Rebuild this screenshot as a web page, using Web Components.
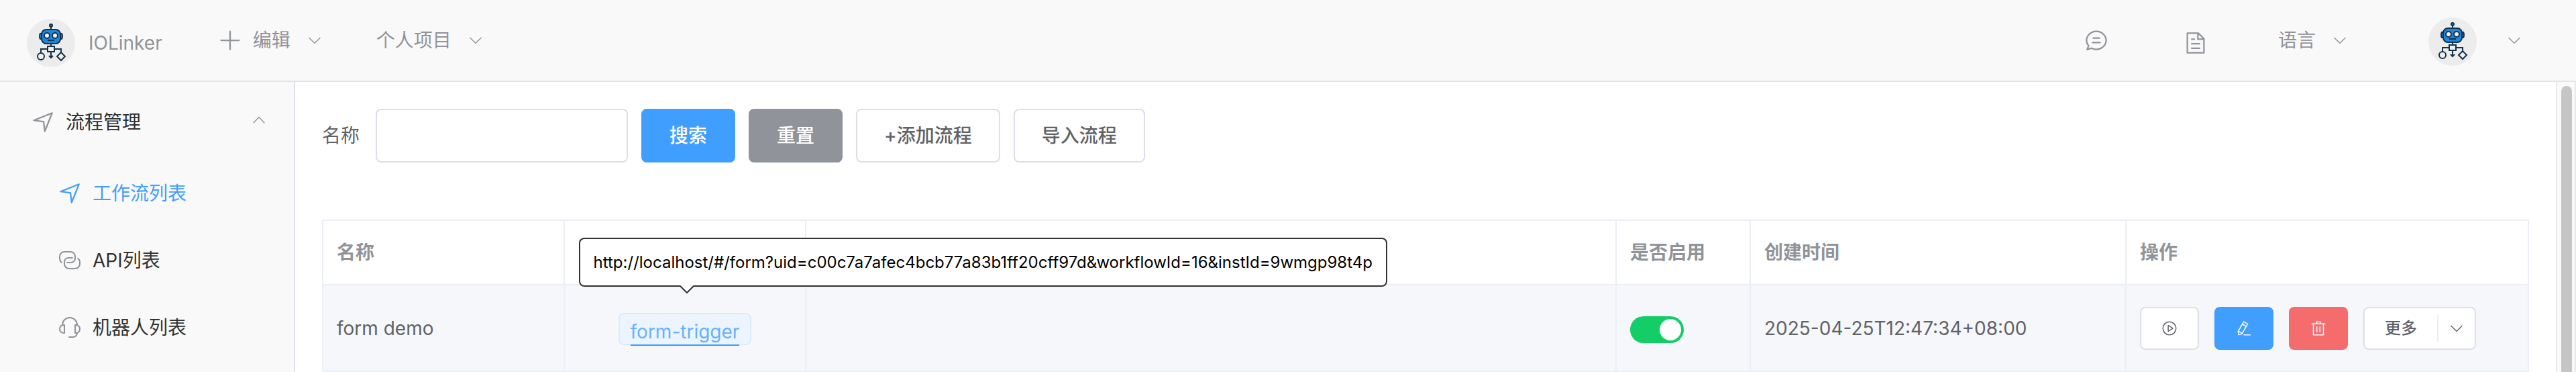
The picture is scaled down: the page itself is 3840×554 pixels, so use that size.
<!DOCTYPE html>
<html lang="zh-CN">
<head>
<meta charset="utf-8">
<title>IOLinker</title>
<style>
body { margin: 0; font: 28px/40px Inter, "Noto Sans CJK SC", sans-serif; color: #606266; background: #fff; }
</style>
</head>
<body>
<io-app></io-app>
<script>
const define = (name, html, setup) => {
  const template = document.createElement('template');
  template.innerHTML = html;
  customElements.define(name, class extends HTMLElement {
    constructor() {
      super();
      this.attachShadow({ mode: 'open' }).append(template.content.cloneNode(true));
    }
    connectedCallback() { if (setup) setup(this, this.shadowRoot); }
  });
};

const P = {
  plus: 'M480 480V128a32 32 0 0 1 64 0v352h352a32 32 0 1 1 0 64H544v352a32 32 0 1 1-64 0V544H128a32 32 0 0 1 0-64z',
  down: 'M831.872 340.864 512 652.672 192.128 340.864a30.592 30.592 0 0 0-42.752 0 29.12 29.12 0 0 0 0 41.6L489.664 714.24a32 32 0 0 0 44.672 0l340.288-331.712a29.12 29.12 0 0 0 0-41.728 30.592 30.592 0 0 0-42.752 0z',
  up: 'm488.832 344.32-339.84 356.672a32 32 0 0 0 0 44.16l.384.384a29.44 29.44 0 0 0 42.688 0l320-335.872 319.872 335.872a29.44 29.44 0 0 0 42.688 0l.384-.384a32 32 0 0 0 0-44.16L535.168 344.32a32 32 0 0 0-46.336 0z',
  position: 'm249.6 417.088 319.744 43.072 39.168 310.272L845.12 178.88 249.6 417.088zm-129.024 47.168a32 32 0 0 1-7.68-61.44l777.792-311.04a32 32 0 0 1 41.6 41.6l-310.336 775.68a32 32 0 0 1-61.44-7.808L512 516.992l-391.424-52.736z',
  chat: 'm174.72 855.68 135.296-45.12 23.68 11.84C388.096 849.536 448.576 864 512 864c211.84 0 384-166.784 384-352S723.84 160 512 160 128 326.784 128 512c0 69.12 24.96 139.264 70.848 199.232l22.08 28.8-46.272 115.584zm-45.248 82.56A32 32 0 0 1 89.6 896l58.368-145.92C94.72 680.32 64 596.864 64 512 64 299.904 256 96 512 96s448 203.904 448 416-192 416-448 416a461.056 461.056 0 0 1-206.912-48.384l-175.616 58.56zM352 576h320q32 0 32 32t-32 32H352q-32 0-32-32t32-32zm32-192h256q32 0 32 32t-32 32H384q-32 0-32-32t32-32z',
  doc: 'M832 384H576V128H192v768h640V384zm-26.496-64L640 154.496V320h165.504zM160 64h480l256 256v608a32 32 0 0 1-32 32H160a32 32 0 0 1-32-32V96a32 32 0 0 1 32-32zm160 448h384v64H320v-64zm0-192h160v64H320v-64zm0 384h384v64H320v-64z',
  play: 'M512 64a448 448 0 1 1 0 896 448 448 0 0 1 0-896zm0 832a384 384 0 0 0 0-768 384 384 0 0 0 0 768zm-48-247.616L668.608 512 464 375.616v272.768zm10.624-342.656 249.472 166.336a48 48 0 0 1 0 79.872L474.624 718.272A48 48 0 0 1 400 678.336V345.6a48 48 0 0 1 74.624-39.936z',
  edit: 'm199.04 672.64 193.984 112 224-387.968-193.92-112-224 388.032zm-23.872 60.16 32.896 148.288 144.896-45.696L175.168 732.8zM455.04 229.248l193.92 112 56.704-98.112-193.984-112-56.64 98.112zM104.32 708.8l384-665.024 304.768 175.936L409.152 884.8h.064l-248.448 78.336L104.32 708.8zm384 254.272v-64h448v64h-448z',
  del: 'M160 256H96a32 32 0 0 1 0-64h256V95.936a32 32 0 0 1 32-32h256a32 32 0 0 1 32 32V192h256a32 32 0 1 1 0 64h-64v672a32 32 0 0 1-32 32H192a32 32 0 0 1-32-32V256zm448-64v-64H416v64h192zM224 896h576V256H224v640zm192-128a32 32 0 0 1-32-32V416a32 32 0 0 1 64 0v320a32 32 0 0 1-32 32zm192 0a32 32 0 0 1-32-32V416a32 32 0 0 1 64 0v320a32 32 0 0 1-32 32z'
};
const stroked = {
  link: '<path d="M6 21Q3 19 3 15V12A7 7 0 0 1 10 5H19A7 7 0 0 1 26 12V15A6 6 0 0 1 20 21H14"/><path d="M30 15Q33 17 33 20V23A7 7 0 0 1 26 30H17A7 7 0 0 1 10 23V20A6 6 0 0 1 16 14H22"/>',
  head: '<path d="M7 14A11 11 0 0 1 29 14M10 14V26Q3 26 3 20T10 14ZM26 14V26Q33 26 33 20T26 14ZM29 26A6 6 0 0 1 23 32H17"/>'
};

define('io-icon', `
<style>
  :host { display: block; flex: none; width: 36px; height: 36px; }
  :host([size="24"]) { width: 24px; height: 24px; }
  svg { display: block; width: 100%; height: 100%; }
</style><svg aria-hidden="true"></svg>`, (host, root) => {
  const name = host.getAttribute('name'), svg = root.querySelector('svg');
  if (stroked[name]) {
    svg.setAttribute('viewBox', '0 0 36 36');
    svg.innerHTML = '<g fill="none" stroke="currentColor" stroke-width="2" stroke-linecap="round" stroke-linejoin="round">' + stroked[name] + '</g>';
  } else {
    svg.setAttribute('viewBox', '0 0 1024 1024');
    svg.innerHTML = '<path fill="currentColor" d="' + P[name] + '"/>';
  }
});

define('io-avatar', `
<style>
  :host { display: block; flex: none; width: 72px; height: 72px; border-radius: 50%; background: #ececec; overflow: hidden; }
  svg { display: block; }
</style>
<svg viewBox="0 0 72 72" width="72" height="72" role="img" aria-label="IOLinker" fill="none" stroke="#15304a" stroke-width="2">
  <path d="M36 12v5M36 37v5M31 45H21v7M41 45h10v6M36 49v8M33 55l3 3 3-3"/>
  <circle cx="36" cy="10" r="2" fill="#1b87dc"/>
  <path d="M22 22h-2q-1 1-1 4t1 4h2M50 22h2q1 1 1 4t-1 4h-2" fill="#1b87dc"/>
  <rect x="22" y="16" width="28" height="21" rx="7" fill="#1b87dc"/>
  <circle cx="30" cy="25" r="4" fill="#f3f1ea"/><circle cx="42" cy="25" r="4" fill="#f3f1ea"/>
  <path d="M31 32h10"/>
  <rect x="31" y="41" width="10" height="8" fill="#f0f0f0"/>
  <circle cx="21" cy="56" r="5" fill="#f0f0f0"/><path d="M51 50l6 6-6 6-6-6z" fill="#f0f0f0"/>
</svg>`);

define('io-menu', `
<style>
  :host { display: block; }
  button { display: flex; align-items: center; gap: 24px; margin: 0; padding: 0; border: 0; background: none; font: inherit; color: inherit; }
  :host(.user) button { gap: 44px; }
  slot { display: flex; align-items: center; gap: 16px; }
</style>
<button type="button" aria-haspopup="menu"><slot></slot><io-icon name="down" size="24"></io-icon></button>`);

define('io-header', `
<style>
  :host { display: flex; align-items: center; box-sizing: border-box; height: 122px; padding: 0 80px 0 40px; background: #f9f9f9; border-bottom: 2px solid #e5e5e5; color: #909399; }
  .brand { display: flex; align-items: center; gap: 20px; padding-top: 8px; color: inherit; text-decoration: none; }
  nav { display: flex; align-items: center; gap: 80px; margin-left: 83px; }
  .tools { display: flex; align-items: center; margin-left: auto; }
  .tools button { margin: 0; padding: 0; border: 0; background: none; color: inherit; }
  .tools .doc { padding-top: 8px; margin: 0 105px 0 112px; }
  .user { margin-left: 120px; }
  .user io-avatar { margin-top: 4px; }
</style>
<a class="brand" href="#/"><io-avatar></io-avatar><span>IOLinker</span></a>
<nav>
  <io-menu><io-icon name="plus"></io-icon>编辑</io-menu>
  <io-menu>个人项目</io-menu>
</nav>
<div class="tools">
  <button type="button" aria-label="消息"><io-icon name="chat"></io-icon></button>
  <button type="button" class="doc" aria-label="文档"><io-icon name="doc"></io-icon></button>
  <io-menu>语言</io-menu>
  <io-menu class="user"><io-avatar></io-avatar></io-menu>
</div>`);

define('io-nav-item', `
<style>
  :host { display: block; color: #303133; }
  a { display: flex; align-items: center; gap: 16px; height: 100px; padding-left: 86px; color: inherit; text-decoration: none; }
  ::slotted(io-icon) { color: #909399; }
  :host([active]), :host([active]) ::slotted(io-icon) { color: #409eff; }
</style>
<a href="#/"><slot name="icon"></slot><span><slot></slot></span></a>`);

define('io-sidebar', `
<style>
  :host { display: block; box-sizing: border-box; background: #f9f9f9; border-right: 2px solid #dcdfe6; color: #303133; }
  button { display: flex; align-items: center; gap: 16px; box-sizing: border-box; width: 100%; height: 116px; margin: 0; padding: 4px 40px 0 46px; border: 0; background: none; font: inherit; color: inherit; }
  button io-icon { color: #909399; }
  .arrow { margin: 0 0 8px auto; }
</style>
<button type="button" aria-expanded="true"><io-icon name="position"></io-icon><span>流程管理</span><io-icon class="arrow" name="up" size="24"></io-icon></button>
<nav>
  <io-nav-item active><io-icon slot="icon" name="position"></io-icon>工作流列表</io-nav-item>
  <io-nav-item><io-icon slot="icon" name="link"></io-icon>API列表</io-nav-item>
  <io-nav-item><io-icon slot="icon" name="head"></io-icon>机器人列表</io-nav-item>
</nav>`);

define('io-button', `
<style>
  :host { display: block; }
  button { display: flex; align-items: center; justify-content: center; box-sizing: border-box; height: 80px; margin: 0; padding: 0 40px; border: 2px solid #dcdfe6; border-radius: 8px; background: #fff; color: #606266; font: inherit; font-weight: 500; white-space: nowrap; }
  :host([type="primary"]) button { background: #409eff; border-color: #409eff; color: #fff; }
  :host([type="info"]) button { background: #909399; border-color: #909399; color: #fff; }
  :host([type="danger"]) button { background: #f56c6c; border-color: #f56c6c; color: #fff; }
  :host([small]) button { height: 64px; padding: 0 30px; }
</style>
<button type="button"><slot></slot></button>`, (host, root) => {
  if (host.title) root.querySelector('button').setAttribute('aria-label', host.title);
});

define('io-search', `
<style>
  :host { display: flex; align-items: center; gap: 20px; }
  label { margin-right: 4px; }
  input { box-sizing: border-box; width: 376px; height: 80px; margin: 0; padding: 0 30px; border: 2px solid #dcdfe6; border-radius: 8px; background: #fff; font: inherit; color: inherit; }
</style>
<label for="name">名称</label><input id="name" type="text">
<io-button type="primary">搜索</io-button>
<io-button type="info">重置</io-button>
<io-button>+添加流程</io-button>
<io-button>导入流程</io-button>`);

define('io-split', `
<style>
  :host { display: flex; align-items: center; box-sizing: border-box; width: 168px; height: 64px; border: 2px solid #dcdfe6; border-radius: 8px; background: #fff; font-size: 24px; font-weight: 500; }
  button { display: flex; align-items: center; justify-content: center; margin: 0; padding: 0; border: 0; background: none; font: inherit; color: #606266; height: 40px; flex: 1; }
  .more { flex: none; width: 56px; border-left: 2px solid #ebeef5; }
</style>
<button type="button"><slot></slot></button><button type="button" class="more" aria-label="展开"><io-icon name="down" size="24"></io-icon></button>`);

define('io-switch', `
<style>
  :host { display: block; padding-top: 4px; }
  input { appearance: none; display: block; box-sizing: border-box; width: 80px; height: 40px; margin: 0; border-radius: 20px; background: #13ce66; }
  input::before { content: ""; display: block; width: 32px; height: 32px; border-radius: 50%; background: #fff; margin: 4px 0 0 44px; }
  input::before { float: left; }
</style>
<input type="checkbox" role="switch" aria-label="是否启用" checked>`);

define('io-tag', `
<style>
  :host { display: block; position: relative; width: fit-content; margin: 0 auto; padding-top: 2px; }
  .tag { box-sizing: border-box; height: 48px; padding: 0 16px; background: #ecf5ff; border: 2px solid #d9ecff; border-radius: 8px; }
  a { display: block; height: 45px; line-height: 52px; border-bottom: 2px solid #409eff; color: #66b1ff; text-decoration: none; }
  .tip { position: absolute; bottom: 87px; left: -59px; box-sizing: border-box; height: 73px; padding: 0 20px; border: 2px solid #303133; border-radius: 8px; background: #fff; color: #000; font-size: 24px; line-height: 70px; white-space: nowrap; }
  svg { position: absolute; left: 148px; top: 69px; }
</style>
<div class="tag"><a href="#/form"><slot></slot></a></div>
<div class="tip" role="tooltip"><slot name="tip"></slot><svg width="22" height="12" viewBox="0 0 22 12"><path d="M1 0L11 10L21 0" fill="#fff"/><path d="M1 1L11 11L21 1" fill="none" stroke="#303133" stroke-width="2"/><path d="M2 0H20L18 2H4z" fill="#fff"/></svg></div>`);

define('io-table', `
<style>
  :host { display: block; }
  table { width: 100%; border-collapse: collapse; table-layout: fixed; }
  th, td { box-sizing: border-box; border: 2px solid #ebeef5; padding: 0 20px; text-align: left; }
  th { height: 96px; font-weight: 700; color: #909399; }
  td { height: 129px; background: #f5f7fa; }
  .c1, .c2 { width: 360px; } .c4 { width: 200px; } .c5 { width: 560px; } .c6 { width: 600px; }
  .ops { display: flex; gap: 23px; }
</style>
<table>
  <colgroup><col class="c1"><col class="c2"><col><col class="c4"><col class="c5"><col class="c6"></colgroup>
  <thead><tr><th>名称</th><th></th><th></th><th>是否启用</th><th>创建时间</th><th>操作</th></tr></thead>
  <tbody><tr>
    <td>form demo</td>
    <td><io-tag>form-trigger<span slot="tip">http://localhost/#/form?uid=c00c7a7afec4bcb77a83b1ff20cff97d&amp;workflowId=16&amp;instId=9wmgp98t4p</span></io-tag></td>
    <td></td>
    <td><io-switch></io-switch></td>
    <td>2025-04-25T12:47:34+08:00</td>
    <td><div class="ops">
      <io-button small title="运行"><io-icon name="play" size="24"></io-icon></io-button>
      <io-button small type="primary" title="编辑"><io-icon name="edit" size="24"></io-icon></io-button>
      <io-button small type="danger" title="删除"><io-icon name="del" size="24"></io-icon></io-button>
      <io-split>更多</io-split>
    </div></td>
  </tr></tbody>
</table>`);

define('io-scrollbar', `
<style>
  :host { display: block; box-sizing: border-box; width: 30px; padding: 6px 4px 0 6px; border: solid #e8e8e8; border-width: 0 2px; background: #fafafa; }
  div { height: 100%; border-radius: 8px 8px 0 0; background: #c6c6c6; }
</style><div></div>`);

define('io-app', `
<style>
  :host { display: flex; flex-direction: column; min-height: 100vh; }
  .body { flex: 1; display: grid; grid-template-columns: 440px minmax(0, 1fr) 30px; }
  main { padding: 40px 40px 0; }
  io-table { margin-top: 85px; }
</style>
<io-header></io-header>
<div class="body"><io-sidebar></io-sidebar><main><io-search></io-search><io-table></io-table></main><io-scrollbar></io-scrollbar></div>`);
</script>
</body>
</html>
